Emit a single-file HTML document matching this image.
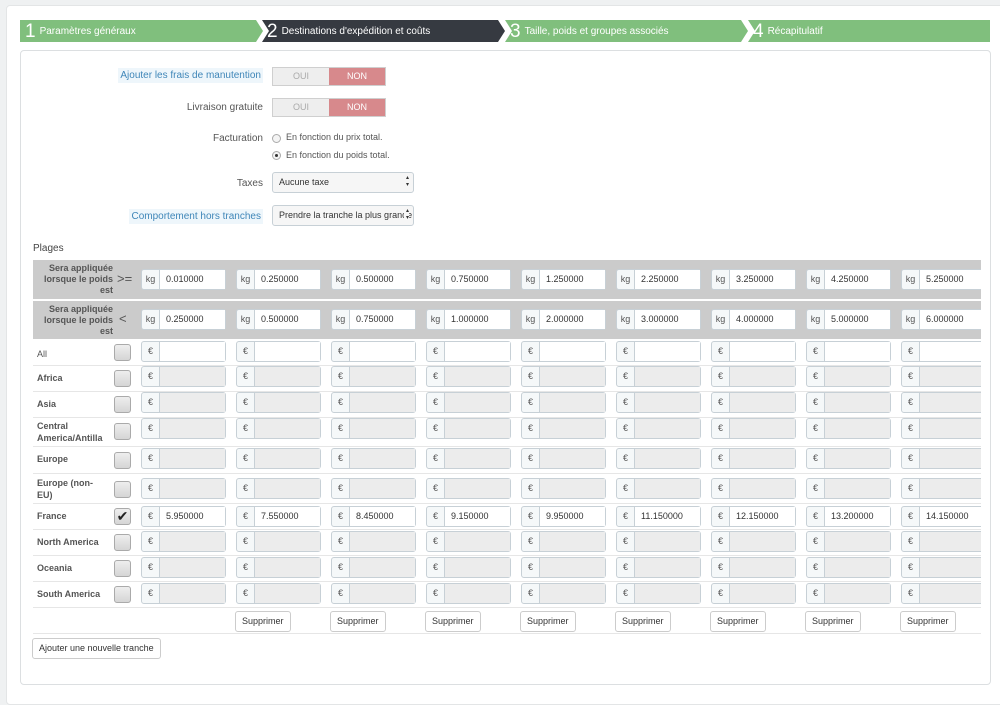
<!DOCTYPE html>
<html><head><meta charset="utf-8"><style>
*{box-sizing:border-box;margin:0;padding:0}
body{width:1000px;height:691px;background:#eff1f2;font-family:"Liberation Sans",sans-serif;font-size:10px;color:#555;position:relative;overflow:hidden}
.a{position:absolute}
.outer{left:6px;top:5px;width:1000px;height:700px;background:#fff;border:1px solid #e3e5e6;border-radius:4px}
.step{top:20px;height:22px;color:#fff;font-size:10px;line-height:22px}
.step b{font-weight:normal;font-size:19px;vertical-align:-3px;margin:0 4px 0 5px}
.panel{left:20px;top:50px;width:971px;height:635px;border:1px solid #dcdfe1;border-radius:4px;background:#fff;overflow:hidden}
.lbl{text-align:right;width:230px;left:12px;font-size:10px;color:#555;white-space:nowrap}
.tog{width:114px;height:19px;border:1px solid #cfcfcf;display:flex;font-size:9px}
.tog span{flex:1;text-align:center;line-height:17px}
.tog .o{background:#eee;color:#aaa}.tog .n{background:#d7898c;color:#fff}
.sel{width:142px;height:21px;border:1px solid #c7d0d6;border-radius:3px;background:#f6f6f6;font-size:9px;line-height:19px;padding-left:6px;color:#333;overflow:hidden;white-space:nowrap}
.sel:after{content:"\25B4\A\25BE";white-space:pre;position:absolute;right:4px;top:2px;font-size:6px;line-height:7px;background:#f6f6f6;padding-left:2px}
.radio{width:9px;height:9px;border:1px solid #aaa;border-radius:50%;background:#f4f4f4}
.hdr{left:12px;width:948px;background:#cbcbcb}
.hl{width:80px;text-align:right;font-weight:bold;font-size:9px;color:#555;line-height:11px}
.sym{left:84px;font-size:13px;color:#555}
.ins{left:120px;display:flex;gap:10px;width:840px;overflow:hidden}
.in{flex:0 0 85px;height:21px;border:1px solid #c7d0d6;border-radius:3px;display:flex;font-size:9px;background:#f5f8f9}
.in i{font-style:normal;width:18px;border-right:1px solid #c7d0d6;text-align:center;line-height:19px;color:#555}
.in span{flex:1;line-height:19px;padding-left:6px;color:#333}
.d span{background:#ececec}
.w span{background:#fff}
.row{left:12px;width:948px;border-bottom:1px solid #e6e6e6}
.rl{left:4px;font-weight:bold;font-size:9px;color:#555;line-height:12px;width:72px}
.cb{left:81px;width:17px;height:17px;border:1px solid #aaa;border-radius:3px;background:linear-gradient(#eee,#d5d5d5)}
.btn{height:21px;border:1px solid #ccc;border-radius:3px;background:#fff;font-size:9px;line-height:19px;padding:0 6px;color:#333}
</style></head><body>
<div class="a outer"></div>
<svg class="a" style="left:20px;top:20px" width="975" height="22">
<polygon points="0,0 236,0 243,11 236,22 0,22" fill="#80bf7d"/>
<polygon points="242,0 478,0 485,11 478,22 242,22 249,11" fill="#363a41"/>
<polygon points="485,0 721,0 728,11 721,22 485,22 492,11" fill="#80bf7d"/>
<polygon points="728,0 970,0 970,22 728,22 735,11" fill="#80bf7d"/>
</svg>
<div class="a step" style="left:20px;top:21px"><b>1</b>Paramètres généraux</div>
<div class="a step" style="left:262px;top:21px"><b>2</b>Destinations d'expédition et coûts</div>
<div class="a step" style="left:505px;top:21px"><b>3</b>Taille, poids et groupes associés</div>
<div class="a step" style="left:748px;top:21px"><b>4</b>Récapitulatif</div>
<div class="a panel">
<div class="a lbl" style="top:19px;color:#3f86b8"><span style="background:#eef6fb;padding:2px 2px">Ajouter les frais de manutention</span></div>
<div class="a tog" style="left:251px;top:16px"><span class="o">OUI</span><span class="n">NON</span></div>
<div class="a lbl" style="top:51px">Livraison gratuite</div>
<div class="a tog" style="left:251px;top:47px"><span class="o">OUI</span><span class="n">NON</span></div>
<div class="a lbl" style="top:82px">Facturation</div>
<div class="a radio" style="left:251px;top:83px"></div><div class="a" style="left:265px;top:81px;font-size:9px">En fonction du prix total.</div>
<div class="a radio" style="left:251px;top:100px"><div style="width:3px;height:3px;background:#333;border-radius:50%;margin:2px"></div></div><div class="a" style="left:265px;top:99px;font-size:9px">En fonction du poids total.</div>
<div class="a lbl" style="top:127px">Taxes</div>
<div class="a sel" style="left:251px;top:121px">Aucune taxe</div>
<div class="a lbl" style="top:160px;color:#3f86b8"><span style="background:#eef6fb;padding:2px 2px">Comportement hors tranches</span></div>
<div class="a sel" style="left:251px;top:154px;padding-right:14px">Prendre la tranche la plus grande</div>
<div class="a" style="left:12px;top:192px;font-size:10px;color:#444">Plages</div>
<div class="a hdr" style="top:209px;height:39px"><div class="a hl" style="top:3px">Sera appliquée lorsque le poids est</div><div class="a sym" style="top:11px;left:84px">&gt;=</div></div>
<div class="a hdr" style="top:250px;height:38px"><div class="a hl" style="top:3px">Sera appliquée lorsque le poids est</div><div class="a sym" style="top:10px;left:86px">&lt;</div></div>
<div class="a ins" style="top:218px"><div class="in w"><i>kg</i><span>0.010000</span></div><div class="in w"><i>kg</i><span>0.250000</span></div><div class="in w"><i>kg</i><span>0.500000</span></div><div class="in w"><i>kg</i><span>0.750000</span></div><div class="in w"><i>kg</i><span>1.250000</span></div><div class="in w"><i>kg</i><span>2.250000</span></div><div class="in w"><i>kg</i><span>3.250000</span></div><div class="in w"><i>kg</i><span>4.250000</span></div><div class="in w"><i>kg</i><span>5.250000</span></div></div>
<div class="a ins" style="top:258px"><div class="in w"><i>kg</i><span>0.250000</span></div><div class="in w"><i>kg</i><span>0.500000</span></div><div class="in w"><i>kg</i><span>0.750000</span></div><div class="in w"><i>kg</i><span>1.000000</span></div><div class="in w"><i>kg</i><span>2.000000</span></div><div class="in w"><i>kg</i><span>3.000000</span></div><div class="in w"><i>kg</i><span>4.000000</span></div><div class="in w"><i>kg</i><span>5.000000</span></div><div class="in w"><i>kg</i><span>6.000000</span></div></div>

<div class="a row" style="top:289px;height:26px"><div class="a rl" style="top:8px;font-weight:normal">All</div><div class="a cb" style="top:4px"></div></div>
<div class="a ins" style="top:290px"><div class="in w"><i>€</i><span></span></div><div class="in w"><i>€</i><span></span></div><div class="in w"><i>€</i><span></span></div><div class="in w"><i>€</i><span></span></div><div class="in w"><i>€</i><span></span></div><div class="in w"><i>€</i><span></span></div><div class="in w"><i>€</i><span></span></div><div class="in w"><i>€</i><span></span></div><div class="in w"><i>€</i><span></span></div></div>

<div class="a row" style="top:315px;height:26px"><div class="a rl" style="top:6px">Africa</div><div class="a cb" style="top:4px"></div></div>
<div class="a ins" style="top:315px"><div class="in d"><i>€</i><span></span></div><div class="in d"><i>€</i><span></span></div><div class="in d"><i>€</i><span></span></div><div class="in d"><i>€</i><span></span></div><div class="in d"><i>€</i><span></span></div><div class="in d"><i>€</i><span></span></div><div class="in d"><i>€</i><span></span></div><div class="in d"><i>€</i><span></span></div><div class="in d"><i>€</i><span></span></div></div>

<div class="a row" style="top:341px;height:26px"><div class="a rl" style="top:6px">Asia</div><div class="a cb" style="top:4px"></div></div>
<div class="a ins" style="top:341px"><div class="in d"><i>€</i><span></span></div><div class="in d"><i>€</i><span></span></div><div class="in d"><i>€</i><span></span></div><div class="in d"><i>€</i><span></span></div><div class="in d"><i>€</i><span></span></div><div class="in d"><i>€</i><span></span></div><div class="in d"><i>€</i><span></span></div><div class="in d"><i>€</i><span></span></div><div class="in d"><i>€</i><span></span></div></div>

<div class="a row" style="top:367px;height:29px"><div class="a rl" style="top:2px">Central America/Antilla</div><div class="a cb" style="top:5px"></div></div>
<div class="a ins" style="top:367px"><div class="in d"><i>€</i><span></span></div><div class="in d"><i>€</i><span></span></div><div class="in d"><i>€</i><span></span></div><div class="in d"><i>€</i><span></span></div><div class="in d"><i>€</i><span></span></div><div class="in d"><i>€</i><span></span></div><div class="in d"><i>€</i><span></span></div><div class="in d"><i>€</i><span></span></div><div class="in d"><i>€</i><span></span></div></div>

<div class="a row" style="top:396px;height:27px"><div class="a rl" style="top:6px">Europe</div><div class="a cb" style="top:5px"></div></div>
<div class="a ins" style="top:397px"><div class="in d"><i>€</i><span></span></div><div class="in d"><i>€</i><span></span></div><div class="in d"><i>€</i><span></span></div><div class="in d"><i>€</i><span></span></div><div class="in d"><i>€</i><span></span></div><div class="in d"><i>€</i><span></span></div><div class="in d"><i>€</i><span></span></div><div class="in d"><i>€</i><span></span></div><div class="in d"><i>€</i><span></span></div></div>

<div class="a row" style="top:423px;height:30px"><div class="a rl" style="top:3px;width:62px">Europe (non-EU)</div><div class="a cb" style="top:7px"></div></div>
<div class="a ins" style="top:427px"><div class="in d"><i>€</i><span></span></div><div class="in d"><i>€</i><span></span></div><div class="in d"><i>€</i><span></span></div><div class="in d"><i>€</i><span></span></div><div class="in d"><i>€</i><span></span></div><div class="in d"><i>€</i><span></span></div><div class="in d"><i>€</i><span></span></div><div class="in d"><i>€</i><span></span></div><div class="in d"><i>€</i><span></span></div></div>

<div class="a row" style="top:453px;height:26px"><div class="a rl" style="top:6px">France</div><div class="a cb" style="top:4px;font-size:14px;line-height:15px;text-align:center;color:#222">✔</div></div>
<div class="a ins" style="top:455px"><div class="in w"><i>€</i><span>5.950000</span></div><div class="in w"><i>€</i><span>7.550000</span></div><div class="in w"><i>€</i><span>8.450000</span></div><div class="in w"><i>€</i><span>9.150000</span></div><div class="in w"><i>€</i><span>9.950000</span></div><div class="in w"><i>€</i><span>11.150000</span></div><div class="in w"><i>€</i><span>12.150000</span></div><div class="in w"><i>€</i><span>13.200000</span></div><div class="in w"><i>€</i><span>14.150000</span></div></div>

<div class="a row" style="top:479px;height:26px"><div class="a rl" style="top:6px;width:90px">North America</div><div class="a cb" style="top:4px"></div></div>
<div class="a ins" style="top:480px"><div class="in d"><i>€</i><span></span></div><div class="in d"><i>€</i><span></span></div><div class="in d"><i>€</i><span></span></div><div class="in d"><i>€</i><span></span></div><div class="in d"><i>€</i><span></span></div><div class="in d"><i>€</i><span></span></div><div class="in d"><i>€</i><span></span></div><div class="in d"><i>€</i><span></span></div><div class="in d"><i>€</i><span></span></div></div>

<div class="a row" style="top:505px;height:26px"><div class="a rl" style="top:6px">Oceania</div><div class="a cb" style="top:4px"></div></div>
<div class="a ins" style="top:506px"><div class="in d"><i>€</i><span></span></div><div class="in d"><i>€</i><span></span></div><div class="in d"><i>€</i><span></span></div><div class="in d"><i>€</i><span></span></div><div class="in d"><i>€</i><span></span></div><div class="in d"><i>€</i><span></span></div><div class="in d"><i>€</i><span></span></div><div class="in d"><i>€</i><span></span></div><div class="in d"><i>€</i><span></span></div></div>

<div class="a row" style="top:531px;height:26px"><div class="a rl" style="top:6px;width:90px">South America</div><div class="a cb" style="top:4px"></div></div>
<div class="a ins" style="top:532px"><div class="in d"><i>€</i><span></span></div><div class="in d"><i>€</i><span></span></div><div class="in d"><i>€</i><span></span></div><div class="in d"><i>€</i><span></span></div><div class="in d"><i>€</i><span></span></div><div class="in d"><i>€</i><span></span></div><div class="in d"><i>€</i><span></span></div><div class="in d"><i>€</i><span></span></div><div class="in d"><i>€</i><span></span></div></div>

<div class="a row" style="top:557px;height:26px"></div>
<div class="a btn" style="left:214px;top:560px">Supprimer</div>
<div class="a btn" style="left:309px;top:560px">Supprimer</div>
<div class="a btn" style="left:404px;top:560px">Supprimer</div>
<div class="a btn" style="left:499px;top:560px">Supprimer</div>
<div class="a btn" style="left:594px;top:560px">Supprimer</div>
<div class="a btn" style="left:689px;top:560px">Supprimer</div>
<div class="a btn" style="left:784px;top:560px">Supprimer</div>
<div class="a btn" style="left:879px;top:560px">Supprimer</div>
<div class="a btn" style="left:11px;top:587px">Ajouter une nouvelle tranche</div>
</div>
</body></html>
